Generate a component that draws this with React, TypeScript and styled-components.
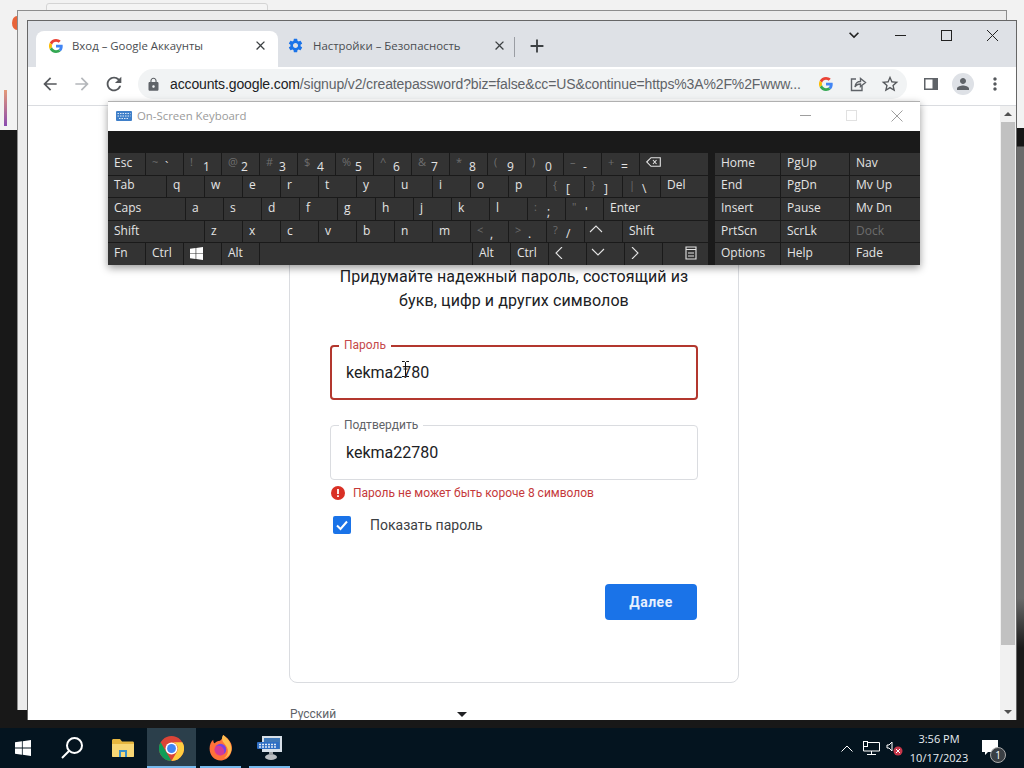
import React from 'react';
import styled, { createGlobalStyle } from 'styled-components';
import {
  MdAdd,
  MdArrowBack,
  MdArrowForward,
  MdClose,
  MdExpandMore,
  MdLock,
  MdMoreVert,
  MdPerson,
  MdRefresh,
  MdSettings,
  MdStarBorder,
} from 'react-icons/md';

const Global = createGlobalStyle`
  html, body { margin: 0; padding: 0; background: #111; }
  * { box-sizing: border-box; }
  #root { width: 1024px; height: 768px; overflow: hidden; }
`;

const Screen = styled.div`
  width: 1024px;
  height: 768px;
  display: flex;
  flex-direction: column;
  font-family: "Open Sans", "Liberation Sans", sans-serif;
`;

const Desktop = styled.div`
  position: relative;
  flex: 1;
  overflow: hidden;
  background: linear-gradient(180deg, #f2f2f2 0, #f2f2f2 130px, #181818 130px, #181818 100%);
`;

const BehindTab = styled.div`
  position: absolute;
  left: 46px;
  top: 3px;
  width: 222px;
  height: 12px;
  background: #f4f4f4;
  border: 1px solid #d4d4d4;
  border-radius: 3px 3px 0 0;
`;

const BehindDot = styled.div`
  position: absolute;
  left: 12px;
  top: 16px;
  width: 10px;
  height: 14px;
  border-radius: 50%;
  background: #e8643a;
`;

const BehindBar = styled.div`
  position: absolute;
  left: 4px;
  top: 90px;
  width: 3px;
  height: 36px;
  background: linear-gradient(180deg, #e59a78, #8a4bb0);
`;

const RightEdge = styled.div`
  position: absolute;
  left: 1017px;
  top: 128px;
  width: 7px;
  height: 592px;
  background: linear-gradient(180deg, #161616 0, #161616 18px, #6a6a6a 19px, #6a6a6a 470px, #1a1a1a 520px);
`;

const BackWindow = styled.div`
  position: absolute;
  left: 17px;
  top: 10px;
  width: 990px;
  height: 700px;
  background: #ececec;
  border: 1px solid #8d8d8d;
  border-bottom: 0;
`;

const BrowserWindow = styled.div`
  position: absolute;
  left: 27px;
  top: 20px;
  width: 990px;
  height: 700px;
  display: flex;
  flex-direction: column;
  background: #fff;
  border: 1px solid #666;
  border-bottom: 0;
`;

const TabStrip = styled.div`
  height: 46px;
  flex: none;
  display: flex;
  align-items: flex-end;
  padding-left: 8px;
  background: #dee1e6;
`;

const Tab = styled.div<{ $active?: boolean }>`
  width: ${({ $active }) => ($active ? '242px' : '236px')};
  height: 36px;
  display: flex;
  align-items: center;
  gap: 9px;
  padding: 0 ${({ $active }) => ($active ? '10px' : '7px')} 7px ${({ $active }) => ($active ? '13px' : '9px')};
  border-radius: 8px 8px 0 0;
  background: ${({ $active }) => ($active ? '#fff' : 'transparent')};
  color: #4a4d51;
  font-size: 11.4px;
  svg { flex: none; }
`;

const TabTitle = styled.span`
  flex: 1;
  white-space: nowrap;
  overflow: hidden;
`;

const NewTab = styled.div`
  position: relative;
  width: 46px;
  height: 36px;
  padding-bottom: 7px;
  display: flex;
  align-items: center;
  justify-content: center;
  color: #3c4043;
  &::before {
    content: '';
    position: absolute;
    left: 0;
    top: 6px;
    width: 1px;
    height: 20px;
    background: #9a9da3;
  }
`;

const WindowControls = styled.div`
  margin-left: auto;
  align-self: flex-start;
  display: flex;
  padding: 4px 1px 0 0;
`;

const WindowButton = styled.div`
  width: 46px;
  height: 20px;
  display: flex;
  align-items: center;
  justify-content: center;
  color: #222;
`;

const Toolbar = styled.div`
  height: 39px;
  flex: none;
  display: flex;
  align-items: center;
  padding: 0 0 4px 6px;
  background: #fff;
  border-bottom: 1px solid #dadce0;
`;

const NavButton = styled.div<{ $dim?: boolean }>`
  width: 32px;
  height: 32px;
  flex: none;
  display: flex;
  align-items: center;
  justify-content: center;
  color: ${({ $dim }) => ($dim ? '#b4b7bb' : '#55585c')};
`;

const Omnibox = styled.div`
  width: 769px;
  height: 30px;
  margin-left: 8px;
  flex: none;
  display: flex;
  align-items: center;
  padding: 0 1px 0 7px;
  border-radius: 15px;
  background: #f1f3f4;
`;

const LockSlot = styled.div`
  width: 25px;
  flex: none;
  padding-left: 1px;
  color: #5f6368;
  display: flex;
`;

const Url = styled.div`
  flex: none;
  font-family: "Liberation Sans", Arial, sans-serif;
  font-size: 14px;
  letter-spacing: -0.13px;
  color: #5f6368;
  white-space: nowrap;
  b { font-weight: 400; color: #202124; }
`;

const OmniIcons = styled.div`
  margin-left: auto;
  display: flex;
`;

const ToolIcons = styled.div`
  margin-left: 8px;
  display: flex;
`;

const Avatar = styled.div`
  width: 22px;
  height: 22px;
  border-radius: 50%;
  background: #dee1e6;
  color: #5f6368;
  display: flex;
  align-items: center;
  justify-content: center;
`;

const Page = styled.div`
  flex: 1;
  min-height: 0;
  display: flex;
  overflow: hidden;
  font-family: Roboto, "Liberation Sans", sans-serif;
`;

const PageBody = styled.div`
  flex: 1;
  display: flex;
  flex-direction: column;
  align-items: center;
  padding-top: 21px;
`;

const Card = styled.div`
  width: 450px;
  height: 556px;
  flex: none;
  display: flex;
  flex-direction: column;
  padding: 137px 40px 0;
  border: 1px solid #dadce0;
  border-radius: 8px;
`;

const Heading = styled.div`
  font-size: 16px;
  line-height: 24px;
  letter-spacing: 0.1px;
  text-align: center;
  color: #202124;
  margin: 0 0 32px;
`;

const Field = styled.div<{ $error?: boolean }>`
  position: relative;
  height: 55px;
  display: flex;
  align-items: center;
  padding-left: ${({ $error }) => ($error ? '14px' : '15px')};
  margin-bottom: ${({ $error }) => ($error ? '25px' : '2px')};
  border: ${({ $error }) => ($error ? '2px solid #b3372e' : '1px solid #dadce0')};
  border-radius: 4px;
  font-size: 16px;
  color: #202124;
`;

const FieldLabel = styled.span<{ $error?: boolean }>`
  position: absolute;
  left: ${({ $error }) => ($error ? '7px' : '8px')};
  top: ${({ $error }) => ($error ? '-10px' : '-9px')};
  padding: 0 5px;
  background: #fff;
  font-size: 12px;
  line-height: 16px;
  color: ${({ $error }) => ($error ? '#c5494a' : '#5f6368')};
`;

const TextCursor = styled.svg`
  position: absolute;
  left: 70px;
  top: 14px;
`;

const ErrorRow = styled.div`
  height: 22px;
  display: flex;
  align-items: center;
  gap: 8px;
  padding-left: 1px;
  font-size: 12px;
  color: #c5393a;
`;

const CheckRow = styled.div`
  display: flex;
  align-items: center;
  gap: 19px;
  margin-top: 12px;
  padding-left: 3px;
  font-size: 14px;
  color: #3c4043;
`;

const CheckBox = styled.div`
  width: 18px;
  height: 18px;
  border-radius: 2px;
  background: #1a73e8;
  display: flex;
  align-items: center;
  justify-content: center;
`;

const Actions = styled.div`
  display: flex;
  justify-content: flex-end;
  margin: 50px 1px 0 0;
`;

const NextButton = styled.button`
  width: 92px;
  height: 36px;
  border: 0;
  border-radius: 4px;
  background: #1a73e8;
  color: #e8f0fe;
  font-family: Roboto, "Liberation Sans", sans-serif;
  font-size: 14px;
  font-weight: 700;
  letter-spacing: 0.5px;
`;

const LangRow = styled.div`
  width: 448px;
  margin-top: 24px;
  display: flex;
  align-items: center;
  font-size: 12px;
  color: #5f6368;
`;

const LangCaret = styled.span`
  margin-left: 121px;
  width: 0;
  height: 0;
  border-left: 5px solid transparent;
  border-right: 5px solid transparent;
  border-top: 5px solid #202124;
`;

const Scrollbar = styled.div`
  width: 16px;
  flex: none;
  display: flex;
  flex-direction: column;
  align-items: center;
  background: #f1f1f1;
`;

const ScrollArrow = styled.span<{ $down?: boolean }>`
  flex: none;
  width: 0;
  height: 0;
  margin: ${({ $down }) => ($down ? 'auto 0 6px' : '6px 0 6px')};
  border-left: 4px solid transparent;
  border-right: 4px solid transparent;
  border-${({ $down }) => ($down ? 'top' : 'bottom')}: 4px solid #505050;
`;

const ScrollThumb = styled.div`
  width: 14px;
  height: 523px;
  flex: none;
  background: #c1c1c1;
`;

/* on-screen keyboard */
const Osk = styled.div`
  position: absolute;
  left: 108px;
  top: 101px;
  width: 812px;
  height: 164px;
  display: flex;
  flex-direction: column;
  background: #1a1a1a;
  box-shadow: 0 3px 8px rgba(0, 0, 0, 0.4);
`;

const OskTitle = styled.div`
  height: 30px;
  flex: none;
  display: flex;
  align-items: center;
  gap: 5px;
  padding: 0 0 2px 8px;
  background: #fff;
  border-top: 1px solid #b0b0b0;
  font-size: 11.4px;
  color: #9a9a9a;
`;

const OskButtons = styled.div`
  margin-left: auto;
  display: flex;
  color: #9e9e9e;
`;

const OskButton = styled.div<{ $faint?: boolean }>`
  width: 46px;
  height: 28px;
  display: flex;
  align-items: center;
  justify-content: center;
  opacity: ${({ $faint }) => ($faint ? 0.3 : 1)};
`;

const OskBody = styled.div`
  flex: 1;
  display: flex;
  gap: 7px;
  margin-top: 22px;
`;

const KeyBlock = styled.div<{ $w: number }>`
  width: ${({ $w }) => $w}px;
  display: flex;
  flex-direction: column;
  gap: 1px;
`;

const KeyRow = styled.div`
  flex: 1;
  display: flex;
  gap: 1px;
`;

const Key = styled.div<{ $w?: number; $dim?: boolean }>`
  flex: ${({ $w }) => ($w ? `0 0 ${$w - 1}px` : '1')};
  display: flex;
  align-items: center;
  padding: 0 0 2px 6px;
  background: #333;
  color: ${({ $dim }) => ($dim ? '#6c6c6c' : '#e4e4e4')};
  font-size: 12px;
  line-height: 1;
  white-space: nowrap;
`;

const ShiftChar = styled.span`
  align-self: flex-start;
  margin-top: 3px;
  width: 13px;
  color: #6e6e6e;
  font-size: 11px;
`;

const MainChar = styled.span`
  align-self: flex-end;
`;

/* taskbar */
const Taskbar = styled.div`
  height: 40px;
  flex: none;
  display: flex;
  align-items: center;
  background: #04141f;
  color: #fff;
`;

const TaskItem = styled.div<{ $active?: boolean; $running?: boolean; $lead?: boolean }>`
  position: relative;
  width: 49px;
  height: 40px;
  flex: none;
  display: flex;
  align-items: center;
  justify-content: center;
  padding-right: ${({ $lead }) => ($lead ? '3px' : '0')};
  background: ${({ $active }) => ($active ? '#2b3f4b' : 'transparent')};
  &::after {
    content: '';
    display: ${({ $running }) => ($running ? 'block' : 'none')};
    position: absolute;
    left: ${({ $active }) => ($active ? '0' : '4px')};
    right: ${({ $active }) => ($active ? '0' : '4px')};
    bottom: 0;
    height: 2px;
    background: #76b9ed;
  }
`;

const Tray = styled.div`
  margin-left: auto;
  height: 100%;
  display: flex;
  align-items: center;
  padding-right: 18px;
`;

const TrayIcon = styled.div`
  width: 24px;
  display: flex;
  justify-content: center;
`;

const Clock = styled.div`
  width: 60px;
  margin: 0 5px 0 2px;
  text-align: center;
  font-size: 11px;
  line-height: 19px;
  color: #e8eef2;
`;

const Notice = styled.div`
  position: relative;
  width: 32px;
  display: flex;
  justify-content: center;
`;

const NoticeBadge = styled.span`
  position: absolute;
  left: 16px;
  top: 7px;
  width: 16px;
  height: 16px;
  border-radius: 50%;
  background: #3a3f44;
  border: 1px solid #aaa;
  font-size: 10px;
  line-height: 14px;
  text-align: center;
`;

type KeyDef = { l?: string; s?: string; m?: string; w: number; icon?: string };

const r = (s: string, m: string): KeyDef => ({ s, m, w: 38 });
const k = (l: string, w = 38): KeyDef => ({ l, w });

const keyRows: KeyDef[][] = [
  [
    k('Esc'), r('~', '`'), r('!', '1'), r('@', '2'), r('#', '3'), r('$', '4'), r('%', '5'), r('^', '6'),
    r('&', '7'), r('*', '8'), r('(', '9'), r(')', '0'), r('–', '-'), r('+', '='), { w: 67, icon: 'back' },
  ],
  [
    k('Tab', 59), k('q'), k('w'), k('e'), k('r'), k('t'), k('y'), k('u'), k('i'), k('o'), k('p'),
    r('{', '['), r('}', ']'), r('|', '\\'), k('Del', 47),
  ],
  [
    k('Caps', 78), k('a'), k('s'), k('d'), k('f'), k('g'), k('h'), k('j'), k('k'), k('l'),
    r(':', ';'), r('"', "'"), k('Enter', 104),
  ],
  [
    k('Shift', 97), k('z'), k('x'), k('c'), k('v'), k('b'), k('n'), k('m'),
    r('<', ','), r('>', '.'), r('?', '/'), { w: 38, icon: 'up' }, k('Shift', 85),
  ],
  [
    k('Fn'), k('Ctrl'), { w: 38, icon: 'win' }, k('Alt'), k('', 213), k('Alt'), k('Ctrl'),
    { w: 38, icon: 'left' }, { w: 38, icon: 'down' }, { w: 38, icon: 'right' }, { w: 45, icon: 'menu' },
  ],
];

const navRows = [
  ['Home', 'PgUp', 'Nav'],
  ['End', 'PgDn', 'Mv Up'],
  ['Insert', 'Pause', 'Mv Dn'],
  ['PrtScn', 'ScrLk', 'Dock'],
  ['Options', 'Help', 'Fade'],
];

const WinLogo = ({ size = 14, color = '#fff' }: { size?: number; color?: string }) => (
  <svg width={size} height={size} viewBox="0 0 16 16" fill={color}>
    <path d="M0 2.3 6.9 1.3V7.6H0zM7.7 1.2 16 0V7.6H7.7zM0 8.4H6.9V14.7L0 13.7zM7.7 8.4H16V16L7.7 14.8z" />
  </svg>
);

const KeyIcon = ({ name }: { name: string }) => {
  const stroke = { fill: 'none', stroke: '#e4e4e4', strokeWidth: 1.1 };
  if (name === 'win') return <WinLogo size={13} />;
  if (name === 'back') {
    return (
      <svg width="15" height="10" viewBox="0 0 15 10" {...stroke} style={{ marginBottom: 2 }}>
        <path d="M.7 5 5 .7H14.300V9.300H5Z" />
        <path d="M7 3 10.500 7M10.500 3 7 7" />
      </svg>
    );
  }
  if (name === 'menu') {
    return (
      <svg width="12" height="14" viewBox="0 0 12 14" {...stroke} style={{ marginLeft: 16 }}>
        <path d="M1 1H11V13H1ZM1 3.500H11M3 7H9M3 10H9" />
      </svg>
    );
  }
  const d: Record<string, string> = {
    up: 'M1 7 7 1 13 7',
    down: 'M1 1 7 7 13 1',
    left: 'M7 0 1 6 7 12',
    right: 'M1 0 7 6 1 12',
  };
  const small = name === 'left' || name === 'right';
  return (
    <svg
      width={small ? 8 : 14}
      height={small ? 12 : 8}
      viewBox={small ? '0 0 8 12' : '0 0 14 8'}
      {...stroke}
      style={small ? undefined : { marginBottom: 3, marginLeft: -2 }}
    >
      <path d={d[name]} />
    </svg>
  );
};

const GoogleG = ({ size = 14 }: { size?: number }) => (
  <svg width={size} height={size} viewBox="0 0 48 48">
    <path fill="#ea4335" d="M24 9.500c3.500 0 6.700 1.200 9.200 3.600l6.900-6.900C35.900 2.400 30.500 0 24 0 14.600 0 6.500 5.400 2.600 13.200l8 6.200C12.500 13.700 17.800 9.500 24 9.500z" />
    <path fill="#4285f4" d="M47 24.500c0-1.600-.1-3.100-.4-4.500H24v9h12.900c-.6 3-2.200 5.500-4.700 7.200l7.700 6C44.400 38 47 31.900 47 24.500z" />
    <path fill="#fbbc05" d="M10.600 28.600A14.500 14.500 0 0 1 10.600 19.400l-8-6.200A24 24 0 0 0 2.600 34.800z" />
    <path fill="#34a853" d="M24 48c6.500 0 11.900-2.100 15.900-5.800l-7.700-6c-2.200 1.500-4.900 2.300-8.200 2.300-6.200 0-11.500-4.200-13.400-9.900l-8 6.200C6.500 42.600 14.600 48 24 48z" />
  </svg>
);

const ShareIcon = () => (
  <svg width="18" height="18" viewBox="0 0 18 18" fill="none" stroke="#5f6368" strokeWidth="1.4">
    <path d="M7 4H2.500V15.500H13V11" />
    <path d="M6 12C6 8 9 6.500 11.500 6.500V3.500L16.500 7.500 11.500 11.500V9C9 9 7 10 6 12Z" />
  </svg>
);

const SidePanelIcon = () => (
  <svg width="16" height="16" viewBox="0 0 16 16">
    <path fill="#5f6368" fillRule="evenodd" d="M1 2H15V14H1ZM2.500 3.500V12.500H9.500V3.500Z" />
  </svg>
);

const CaretIcon = () => (
  <TextCursor width="7" height="16" viewBox="0 0 7 16" fill="none" stroke="#111" strokeWidth="1">
    <path d="M0 .5H2.500L3.500 1.500 4.500.5H7M3.500 1.500V14.500M0 15.500H2.500L3.500 14.500 4.500 15.500H7M1.500 8H5.500" />
  </TextCursor>
);

const ChromeLogo = () => (
  <svg width="25" height="25" viewBox="0 0 48 48">
    <circle cx="24" cy="24" r="24" fill="#db4437" />
    <path fill="#0f9d58" d="M3.200 12 13.500 30 24 48A24 24 0 0 1 3.200 12z" />
    <path fill="#ffcd40" d="M24 12H44.800A24 24 0 0 1 24 48L34.400 30A12 12 0 0 0 24 12z" />
    <circle cx="24" cy="24" r="11.500" fill="#fff" />
    <circle cx="24" cy="24" r="8.500" fill="#4285f4" />
  </svg>
);

const FirefoxLogo = () => (
  <svg width="25" height="26" viewBox="0 0 48 50">
    <path fill="#ff7139" d="M3 26C3 18 6 12 10 9C10 13 11 15 13 16C15 13 19 11 23 11C27 8 29 4 29 0C38 6 41 10 43 14C47 20 47 30 43 37C39 45 32 49 24 49C12 49 3 39 3 26Z" />
    <path fill="#ffbd4f" d="M29 0C38 6 45 15 45 27C45 37 37 44 30 45C37 41 40 33 37 25C34 17 27 14 27 7C27 4 28 2 29 0Z" />
    <circle cx="24" cy="28" r="11" fill="#7542e5" />
    <path fill="#f23a7d" d="M13 24C16 20 23 20 27 23C31 26 33 32 29 38C26 40 20 41 16 37C12 33 11 28 13 24Z" opacity=".75" />
  </svg>
);

const FolderIcon = () => (
  <svg width="22" height="20" viewBox="0 0 22 20">
    <path fill="#e7b73f" d="M0 2.500C0 1.500.7 1 1.500 1H8L10 3.500H20.500C21.400 3.500 22 4 22 5V17.500C22 18.500 21.400 19 20.500 19H1.500C.7 19 0 18.500 0 17.500Z" />
    <path fill="#f8d775" d="M0 6H22V17.500C22 18.500 21.400 19 20.500 19H1.500C.7 19 0 18.500 0 17.500Z" />
    <path fill="#3a8fc7" d="M7 12H15V19H13V14H9V19H7Z" />
  </svg>
);

const OskLogo = () => (
  <svg width="26" height="24" viewBox="0 0 26 24">
    <rect x="5" y="0" width="20" height="16" fill="#d7dfe7" />
    <rect x="7" y="2" width="16" height="11" fill="#3f78b8" />
    <rect x="0" y="6" width="22" height="7" rx="1" fill="#2f6fc4" />
    <path stroke="#dfe9f5" strokeWidth="1.500" strokeDasharray="2 1" d="M2 8.500H20M2 11H20" />
    <ellipse cx="14" cy="21" rx="6" ry="3" fill="#b9bdc1" />
    <rect x="12" y="16" width="4" height="3" fill="#9da1a5" />
  </svg>
);

const KeyboardSmall = () => (
  <svg width="16" height="10" viewBox="0 0 16 10">
    <rect width="16" height="10" rx="1" fill="#3f7fc9" />
    <path stroke="#dce9f7" strokeDasharray="1.500 1" d="M1.500 2.500H14.500M1.500 5H14.500M3 7.500H13" />
  </svg>
);

const App = () => (
  <Screen>
    <Global />
    <Desktop>
      <BehindTab />
      <BehindDot />
      <BehindBar />
      <RightEdge />
      <BackWindow />
      <BrowserWindow>
        <TabStrip>
          <Tab $active>
            <GoogleG />
            <TabTitle>Вход – Google Аккаунты</TabTitle>
            <MdClose size={15} color="#3c4043" />
          </Tab>
          <Tab>
            <MdSettings size={17} color="#1a73e8" />
            <TabTitle>Настройки – Безопасность</TabTitle>
            <MdClose size={15} color="#3c4043" />
          </Tab>
          <NewTab>
            <MdAdd size={22} />
          </NewTab>
          <WindowControls>
            <WindowButton>
              <MdExpandMore size={20} />
            </WindowButton>
            <WindowButton>
              <svg width="11" height="11" viewBox="0 0 11 11" stroke="currentColor">
                <path d="M0 5.500H11" />
              </svg>
            </WindowButton>
            <WindowButton>
              <svg width="11" height="11" viewBox="0 0 11 11" fill="none" stroke="currentColor">
                <rect x=".5" y=".5" width="10" height="10" />
              </svg>
            </WindowButton>
            <WindowButton>
              <svg width="11" height="11" viewBox="0 0 11 11" stroke="currentColor">
                <path d="M0 0 11 11M11 0 0 11" />
              </svg>
            </WindowButton>
          </WindowControls>
        </TabStrip>
        <Toolbar>
          <NavButton>
            <MdArrowBack size={20} />
          </NavButton>
          <NavButton $dim>
            <MdArrowForward size={20} />
          </NavButton>
          <NavButton>
            <MdRefresh size={22} />
          </NavButton>
          <Omnibox>
            <LockSlot>
              <MdLock size={15} />
            </LockSlot>
            <Url>
              <b>accounts.google.com</b>/signup/v2/createpassword?biz=false&amp;cc=US&amp;continue=https%3A%2F%2Fwww...
            </Url>
            <OmniIcons>
              <NavButton>
                <GoogleG />
              </NavButton>
              <NavButton>
                <ShareIcon />
              </NavButton>
              <NavButton>
                <MdStarBorder size={20} />
              </NavButton>
            </OmniIcons>
          </Omnibox>
          <ToolIcons>
            <NavButton>
              <SidePanelIcon />
            </NavButton>
            <NavButton>
              <Avatar>
                <MdPerson size={18} />
              </Avatar>
            </NavButton>
            <NavButton>
              <MdMoreVert size={20} />
            </NavButton>
          </ToolIcons>
        </Toolbar>
        <Page>
          <PageBody>
            <Card>
              <Heading>
                Придумайте надежный пароль, состоящий из
                <br />
                букв, цифр и других символов
              </Heading>
              <Field $error>
                <FieldLabel $error>Пароль</FieldLabel>
                kekma2780
                <CaretIcon />
              </Field>
              <Field>
                <FieldLabel>Подтвердить</FieldLabel>
                kekma22780
              </Field>
              <ErrorRow>
                <svg width="14" height="14" viewBox="0 0 14 14">
                  <circle cx="7" cy="7" r="7" fill="#d93025" />
                  <path d="M6.100 3H7.900V8H6.100ZM6.100 9.300H7.900V11H6.100Z" fill="#fff" />
                </svg>
                Пароль не может быть короче 8 символов
              </ErrorRow>
              <CheckRow>
                <CheckBox>
                  <svg width="14" height="14" viewBox="0 0 14 14" fill="none" stroke="#fff" strokeWidth="2">
                    <path d="M2 7.500 5.500 11 12 3.500" />
                  </svg>
                </CheckBox>
                Показать пароль
              </CheckRow>
              <Actions>
                <NextButton>Далее</NextButton>
              </Actions>
            </Card>
            <LangRow>
              Русский
              <LangCaret />
            </LangRow>
          </PageBody>
          <Scrollbar>
            <ScrollArrow />
            <ScrollThumb />
            <ScrollArrow $down />
          </Scrollbar>
        </Page>
      </BrowserWindow>
      <Osk>
        <OskTitle>
          <KeyboardSmall />
          On-Screen Keyboard
          <OskButtons>
            <OskButton>
              <svg width="11" height="11" viewBox="0 0 11 11" stroke="currentColor">
                <path d="M0 5.500H11" />
              </svg>
            </OskButton>
            <OskButton $faint>
              <svg width="11" height="11" viewBox="0 0 11 11" fill="none" stroke="currentColor">
                <rect x=".5" y=".5" width="10" height="10" />
              </svg>
            </OskButton>
            <OskButton>
              <svg width="12" height="12" viewBox="0 0 12 12" stroke="currentColor">
                <path d="M.5.5 11.500 11.500M11.500.5.500 11.500" />
              </svg>
            </OskButton>
          </OskButtons>
        </OskTitle>
        <OskBody>
          <KeyBlock $w={600}>
            {keyRows.map((row, i) => (
              <KeyRow key={i}>
                {row.map((key, j) => (
                  <Key key={j} $w={j === row.length - 1 ? undefined : key.w}>
                    {key.icon && <KeyIcon name={key.icon} />}
                    {key.l}
                    {key.s && <ShiftChar>{key.s}</ShiftChar>}
                    {key.m && <MainChar>{key.m}</MainChar>}
                  </Key>
                ))}
              </KeyRow>
            ))}
          </KeyBlock>
          <KeyBlock $w={205}>
            {navRows.map((row) => (
              <KeyRow key={row[0]}>
                <Key $w={66}>{row[0]}</Key>
                <Key $w={69}>{row[1]}</Key>
                <Key $dim={row[2] === 'Dock'}>{row[2]}</Key>
              </KeyRow>
            ))}
          </KeyBlock>
        </OskBody>
      </Osk>
    </Desktop>
    <Taskbar>
      <TaskItem $lead>
        <WinLogo size={16} />
      </TaskItem>
      <TaskItem $lead>
        <svg width="24" height="24" viewBox="0 0 24 24" fill="none" stroke="#fff" strokeWidth="2">
          <circle cx="14.500" cy="9.500" r="7.500" />
          <path d="M9 15 2 22" />
        </svg>
      </TaskItem>
      <TaskItem>
        <FolderIcon />
      </TaskItem>
      <TaskItem $active $running>
        <ChromeLogo />
      </TaskItem>
      <TaskItem $running>
        <FirefoxLogo />
      </TaskItem>
      <TaskItem $running>
        <OskLogo />
      </TaskItem>
      <Tray>
        <TrayIcon>
          <svg width="12" height="7" viewBox="0 0 12 7" fill="none" stroke="#fff">
            <path d="M.5 6.500 6 1 11.500 6.500" />
          </svg>
        </TrayIcon>
        <TrayIcon>
          <svg width="17" height="14" viewBox="0 0 17 14" fill="none" stroke="#fff">
            <path d="M.5 1.500H16.500V10H.5ZM8.500 10V13M4 13.500H13" />
            <rect x=".5" y=".5" width="4" height="5" fill="#04141f" />
          </svg>
        </TrayIcon>
        <TrayIcon>
          <svg width="18" height="16" viewBox="0 0 18 16">
            <path d="M1 5H3L6 2V11L3 8H1Z" fill="none" stroke="#fff" />
            <circle cx="12" cy="11" r="4.500" fill="#c8374a" />
            <path d="M10 9 14 13M14 9 10 13" stroke="#fff" />
          </svg>
        </TrayIcon>
        <Clock>
          3:56 PM
          <br />
          10/17/2023
        </Clock>
        <Notice>
          <svg width="17" height="17" viewBox="0 0 17 17" fill="#fff">
            <path d="M0 0H16V12H6L3 15V12H0Z" />
          </svg>
          <NoticeBadge>1</NoticeBadge>
        </Notice>
      </Tray>
    </Taskbar>
  </Screen>
);

export default App;
